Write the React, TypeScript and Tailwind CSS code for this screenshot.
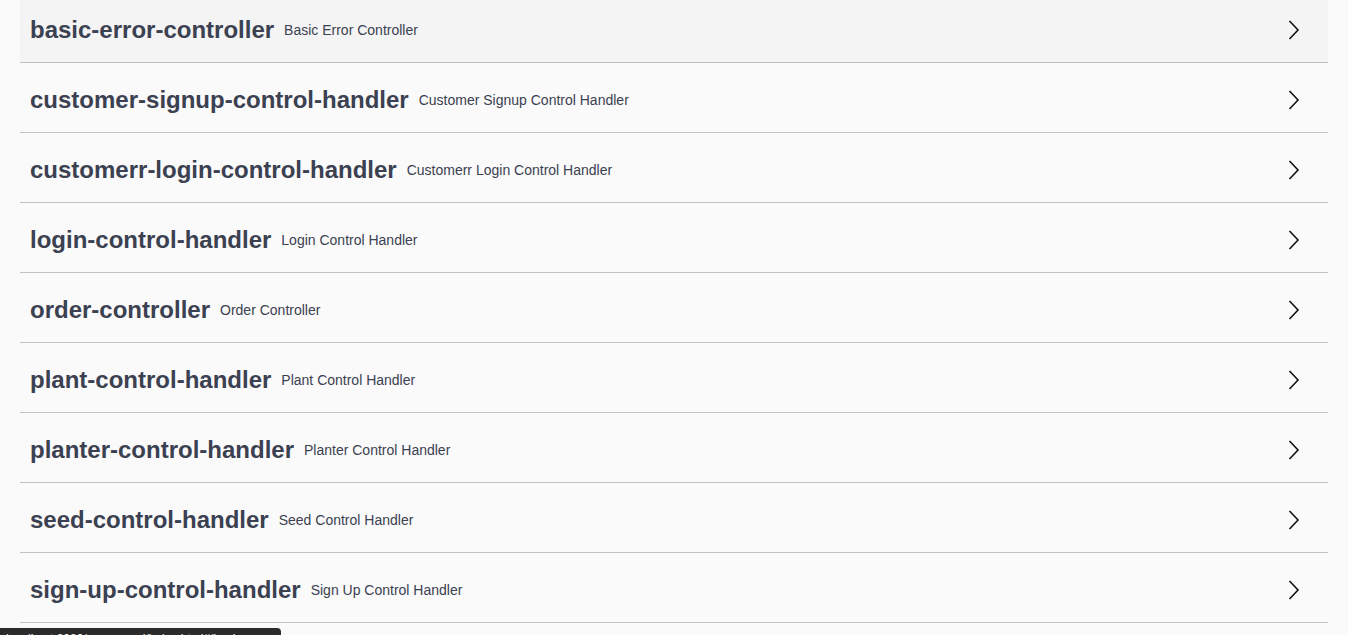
const tags = [
  ["basic-error-controller", "Basic Error Controller"],
  ["customer-signup-control-handler", "Customer Signup Control Handler"],
  ["customerr-login-control-handler", "Customerr Login Control Handler"],
  ["login-control-handler", "Login Control Handler"],
  ["order-controller", "Order Controller"],
  ["plant-control-handler", "Plant Control Handler"],
  ["planter-control-handler", "Planter Control Handler"],
  ["seed-control-handler", "Seed Control Handler"],
  ["sign-up-control-handler", "Sign Up Control Handler"],
  ["user-control-handler", "User Control Handler"],
];

const Arrow = () => (
  <svg width="20" height="20" viewBox="0 0 20 20" aria-hidden="true">
    <polyline
      points="5.5,1 14,10 5.5,19"
      fill="none"
      stroke="#111"
      strokeWidth="1.6"
    />
  </svg>
);

const TagRow = ({
  name,
  description,
  hovered,
}: {
  name: string;
  description: string;
  hovered?: boolean;
}) => (
  <div className="mb-[5px]">
    <h4
      className={`flex h-[65px] items-center border-b border-[#3b4151]/30 py-[10px] pl-[10px] pr-[20px] ${
        hovered ? "bg-[#f4f4f4]" : ""
      }`}
    >
      <span className="text-[24px] leading-none font-bold text-[#3b4151]">
        {name}
      </span>
      <small className="flex-1 px-[10px] text-[14px] font-normal text-[#3b4151]">
        {description}
      </small>
      <span className="mr-[4px] flex h-5 w-5 items-center">
        <Arrow />
      </span>
    </h4>
  </div>
);

export default function App() {
  return (
    <div className="relative h-[635px] overflow-hidden bg-[#fafafa] font-['Liberation_Sans',Arial,sans-serif]">
      <div className="-mt-[2px] px-5">
        {tags.map(([name, description], i) => (
          <TagRow
            key={name}
            name={name}
            description={description}
            hovered={i === 0}
          />
        ))}
      </div>
      <div className="absolute top-[628px] left-0 h-[24px] w-[281px] overflow-hidden rounded-tr-[4px] bg-[#2b2b2b] pl-[6px] pt-[2px] text-[12px] whitespace-nowrap text-white">
        localhost:8080/swagger-ui/index.html#/basic-error-controller
      </div>
    </div>
  );
}
